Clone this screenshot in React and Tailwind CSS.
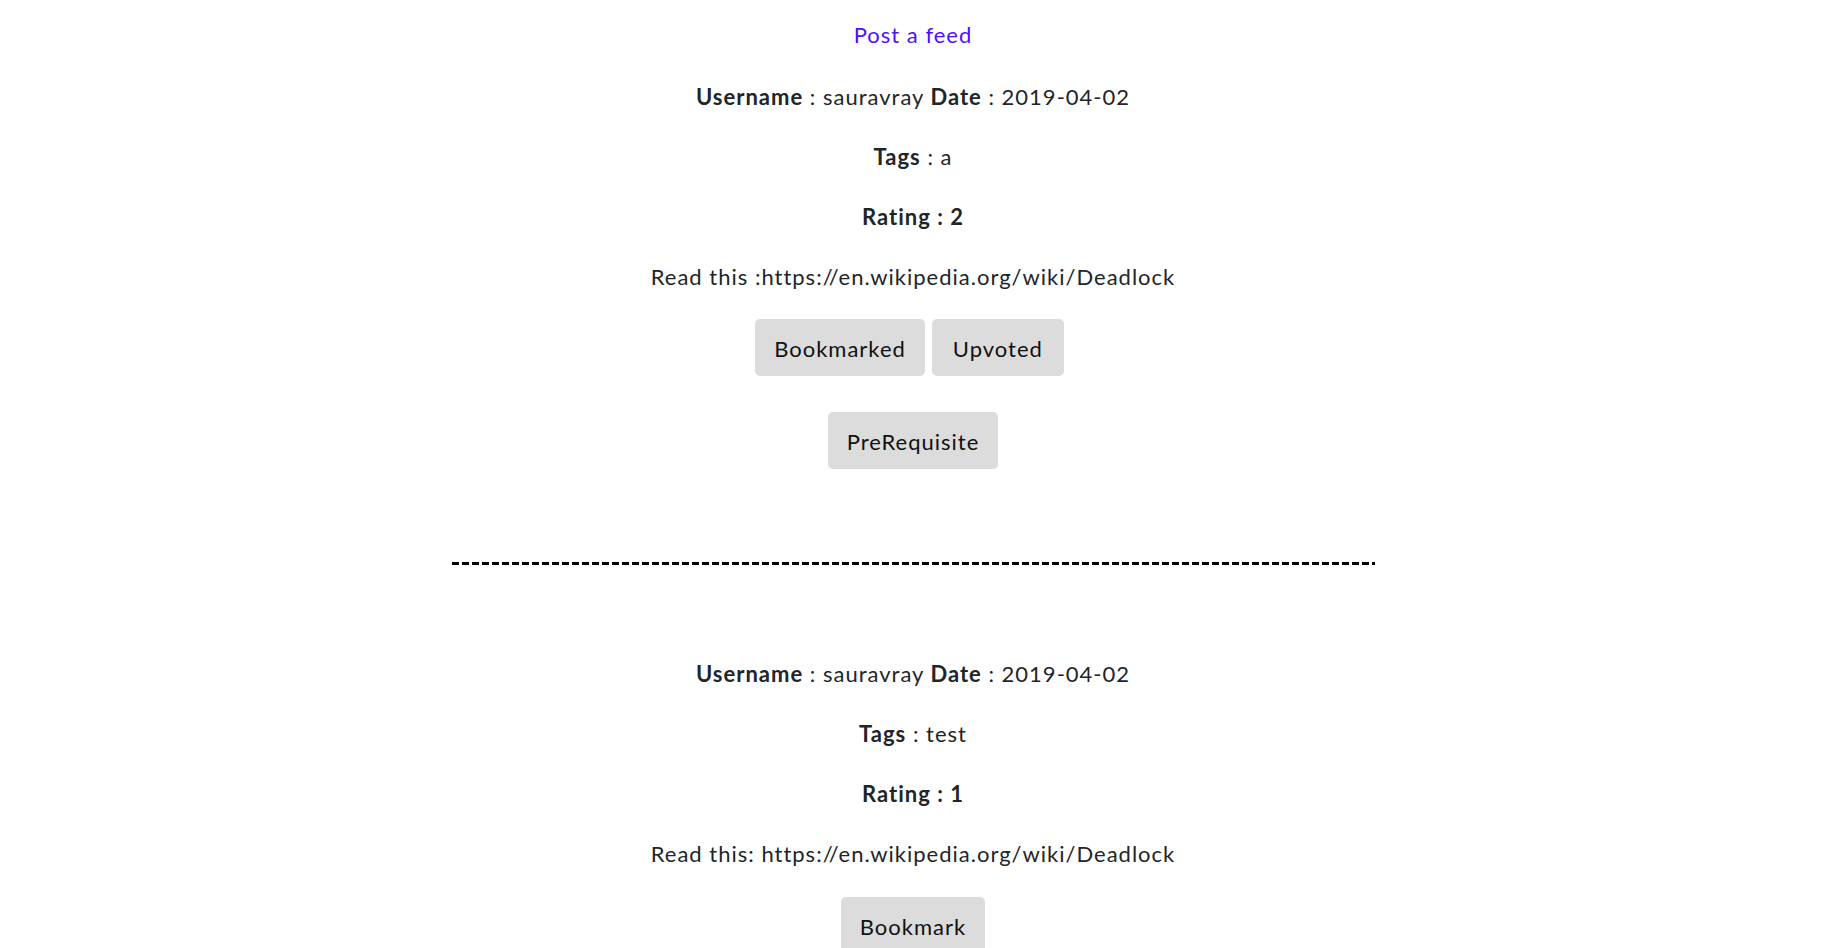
import React from 'react';

const feeds = [
    {
        username: 'sauravray',
        date: '2019-04-02',
        tags: 'a',
        rating: 2,
        text: 'Read this :https://en.wikipedia.org/wiki/Deadlock',
        bookmarked: true,
        upvoted: true,
        prereq: true,
    },
    {
        username: 'sauravray',
        date: '2019-04-02',
        tags: 'test',
        rating: 1,
        text: 'Read this: https://en.wikipedia.org/wiki/Deadlock',
        bookmarked: false,
        upvoted: false,
        prereq: false,
    },
];

const Btn = ({ children, className = '' }) => (
    <button className={`h-[57px] px-[19px] pt-[2px] rounded-[5px] bg-[#dcdcdc] text-[#111] text-[22px] tracking-[1px] leading-none ${className}`}>
        {children}
    </button>
);

const Feed = ({ feed }) => (
    <div className="flex flex-col items-center">
        <p className="h-[30px] leading-[30px]">
            <b>Username</b> : {feed.username} <b>Date</b> : {feed.date}
        </p>
        <p className="mt-[30px] h-[30px] leading-[30px]">
            <b>Tags</b> : {feed.tags}
        </p>
        <p className="mt-[30px] h-[30px] leading-[30px] font-bold">Rating : {feed.rating}</p>
        <p className="mt-[30px] h-[30px] leading-[30px]">{feed.text}</p>
        {feed.bookmarked ? (
            <>
                <div className="mt-[27px] flex">
                    <Btn className="mr-[7px]">Bookmarked</Btn>
                    <Btn className="mr-[7px] px-[21px]">Upvoted</Btn>
                </div>
                {feed.prereq && <Btn className="mt-[36px]">PreRequisite</Btn>}
            </>
        ) : (
            <div className="mt-[28px] flex">
                <Btn>Bookmark</Btn>
            </div>
        )}
    </div>
);

export default function App() {
    return (
        <div
            className="w-[1826px] min-h-screen bg-white text-[#212529] text-[22px] tracking-[1px] overflow-hidden"
            style={{ fontFamily: 'Lato, "Noto Sans", sans-serif' }}
        >
            <div className="flex flex-col items-center">
                <a href="#" className="mt-[20px] h-[30px] leading-[30px] text-[#4c0fff]">Post a feed</a>
                <div className="mt-[32px]">
                    <Feed feed={feeds[0]} />
                </div>
                {/* divider */}
                <div className="mt-[93px] w-[923px] h-[3px] bg-[repeating-linear-gradient(90deg,#000_0_7px,transparent_7px_10px)]" />
                <div className="mt-[94px]">
                    <Feed feed={feeds[1]} />
                </div>
            </div>
        </div>
    );
}
